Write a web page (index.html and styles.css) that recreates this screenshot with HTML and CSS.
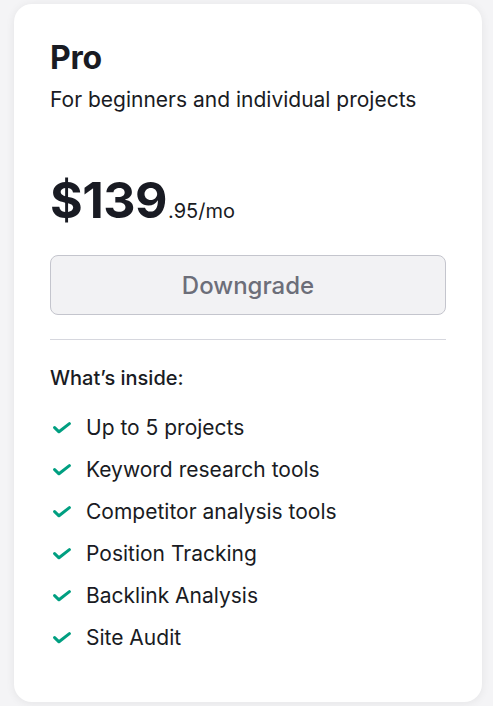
FILE: index.html
```html
<!DOCTYPE html>
<html lang="en">
<head>
<meta charset="utf-8">
<title>Pro plan</title>
<link rel="stylesheet" href="styles.css">
</head>
<body>
<div class="page">
  <section class="card">
    <h2 class="plan-name">Pro</h2>
    <p class="plan-desc">For beginners and individual projects</p>
    <div class="price">
      <span class="price-main">$139</span><span class="price-cents">.95/mo</span>
    </div>
    <button class="btn" type="button">Downgrade</button>
    <hr class="divider">
    <h3 class="inside-title">What’s inside:</h3>
    <ul class="features">
      <li class="feature"><svg class="check" viewBox="0 0 18 12" aria-hidden="true"><path d="M1.6 5.6 L6 9.8 L16.4 1.6"/></svg><span>Up to 5 projects</span></li>
      <li class="feature"><svg class="check" viewBox="0 0 18 12" aria-hidden="true"><path d="M1.6 5.6 L6 9.8 L16.4 1.6"/></svg><span>Keyword research tools</span></li>
      <li class="feature"><svg class="check" viewBox="0 0 18 12" aria-hidden="true"><path d="M1.6 5.6 L6 9.8 L16.4 1.6"/></svg><span>Competitor analysis tools</span></li>
      <li class="feature"><svg class="check" viewBox="0 0 18 12" aria-hidden="true"><path d="M1.6 5.6 L6 9.8 L16.4 1.6"/></svg><span>Position Tracking</span></li>
      <li class="feature"><svg class="check" viewBox="0 0 18 12" aria-hidden="true"><path d="M1.6 5.6 L6 9.8 L16.4 1.6"/></svg><span>Backlink Analysis</span></li>
      <li class="feature"><svg class="check" viewBox="0 0 18 12" aria-hidden="true"><path d="M1.6 5.6 L6 9.8 L16.4 1.6"/></svg><span>Site Audit</span></li>
    </ul>
  </section>
</div>
</body>
</html>
```
FILE: styles.css
```css
* { box-sizing: border-box; }
html, body {
  margin: 0;
  padding: 0;
  background: #f4f4f6;
  font-family: Inter, "Noto Sans", "Liberation Sans", sans-serif;
  color: #191b23;
}
.page {
  padding: 4px 11px 4px 14px;
}
.card {
  background: #ffffff;
  border-radius: 18px;
  box-shadow: 0 1px 10px rgba(25, 27, 35, 0.07);
  padding: 34px 36px 48px;
  height: 698px;
}
.plan-name {
  margin: 0;
  font-size: 32px;
  line-height: 40px;
  font-weight: 700;
  letter-spacing: -0.3px;
}
.plan-desc {
  margin: 8px 0 0;
  font-size: 21px;
  line-height: 28px;
  font-weight: 400;
}
.price {
  margin-top: 58px;
  display: flex;
  align-items: baseline;
}
.price-main {
  font-size: 50px;
  line-height: 56px;
  font-weight: 700;
  letter-spacing: -0.5px;
}
.price-cents {
  font-size: 20px;
  font-weight: 400;
  margin-left: 1px;
}
.btn {
  display: block;
  width: 100%;
  height: 60px;
  margin-top: 27px;
  background: #f2f2f4;
  border: 1px solid #c4c5cd;
  border-radius: 8px;
  font-family: inherit;
  font-size: 24px;
  font-weight: 500;
  color: #6c6e79;
  cursor: default;
}
.divider {
  border: 0;
  border-top: 1px solid #d6d7de;
  margin: 24px 0 0;
}
.inside-title {
  margin: 24px 0 0;
  font-size: 20px;
  line-height: 28px;
  font-weight: 500;
}
.features {
  list-style: none;
  margin: 22px 0 0;
  padding: 0;
  display: flex;
  flex-direction: column;
  gap: 14px;
}
.feature {
  display: flex;
  align-items: center;
  gap: 15px;
  font-size: 21px;
  line-height: 28px;
}
.check {
  width: 18px;
  height: 12px;
  margin-left: 3px;
  flex: none;
  fill: none;
  stroke: #009f81;
  stroke-width: 3;
  stroke-linecap: round;
  stroke-linejoin: round;
}
```
